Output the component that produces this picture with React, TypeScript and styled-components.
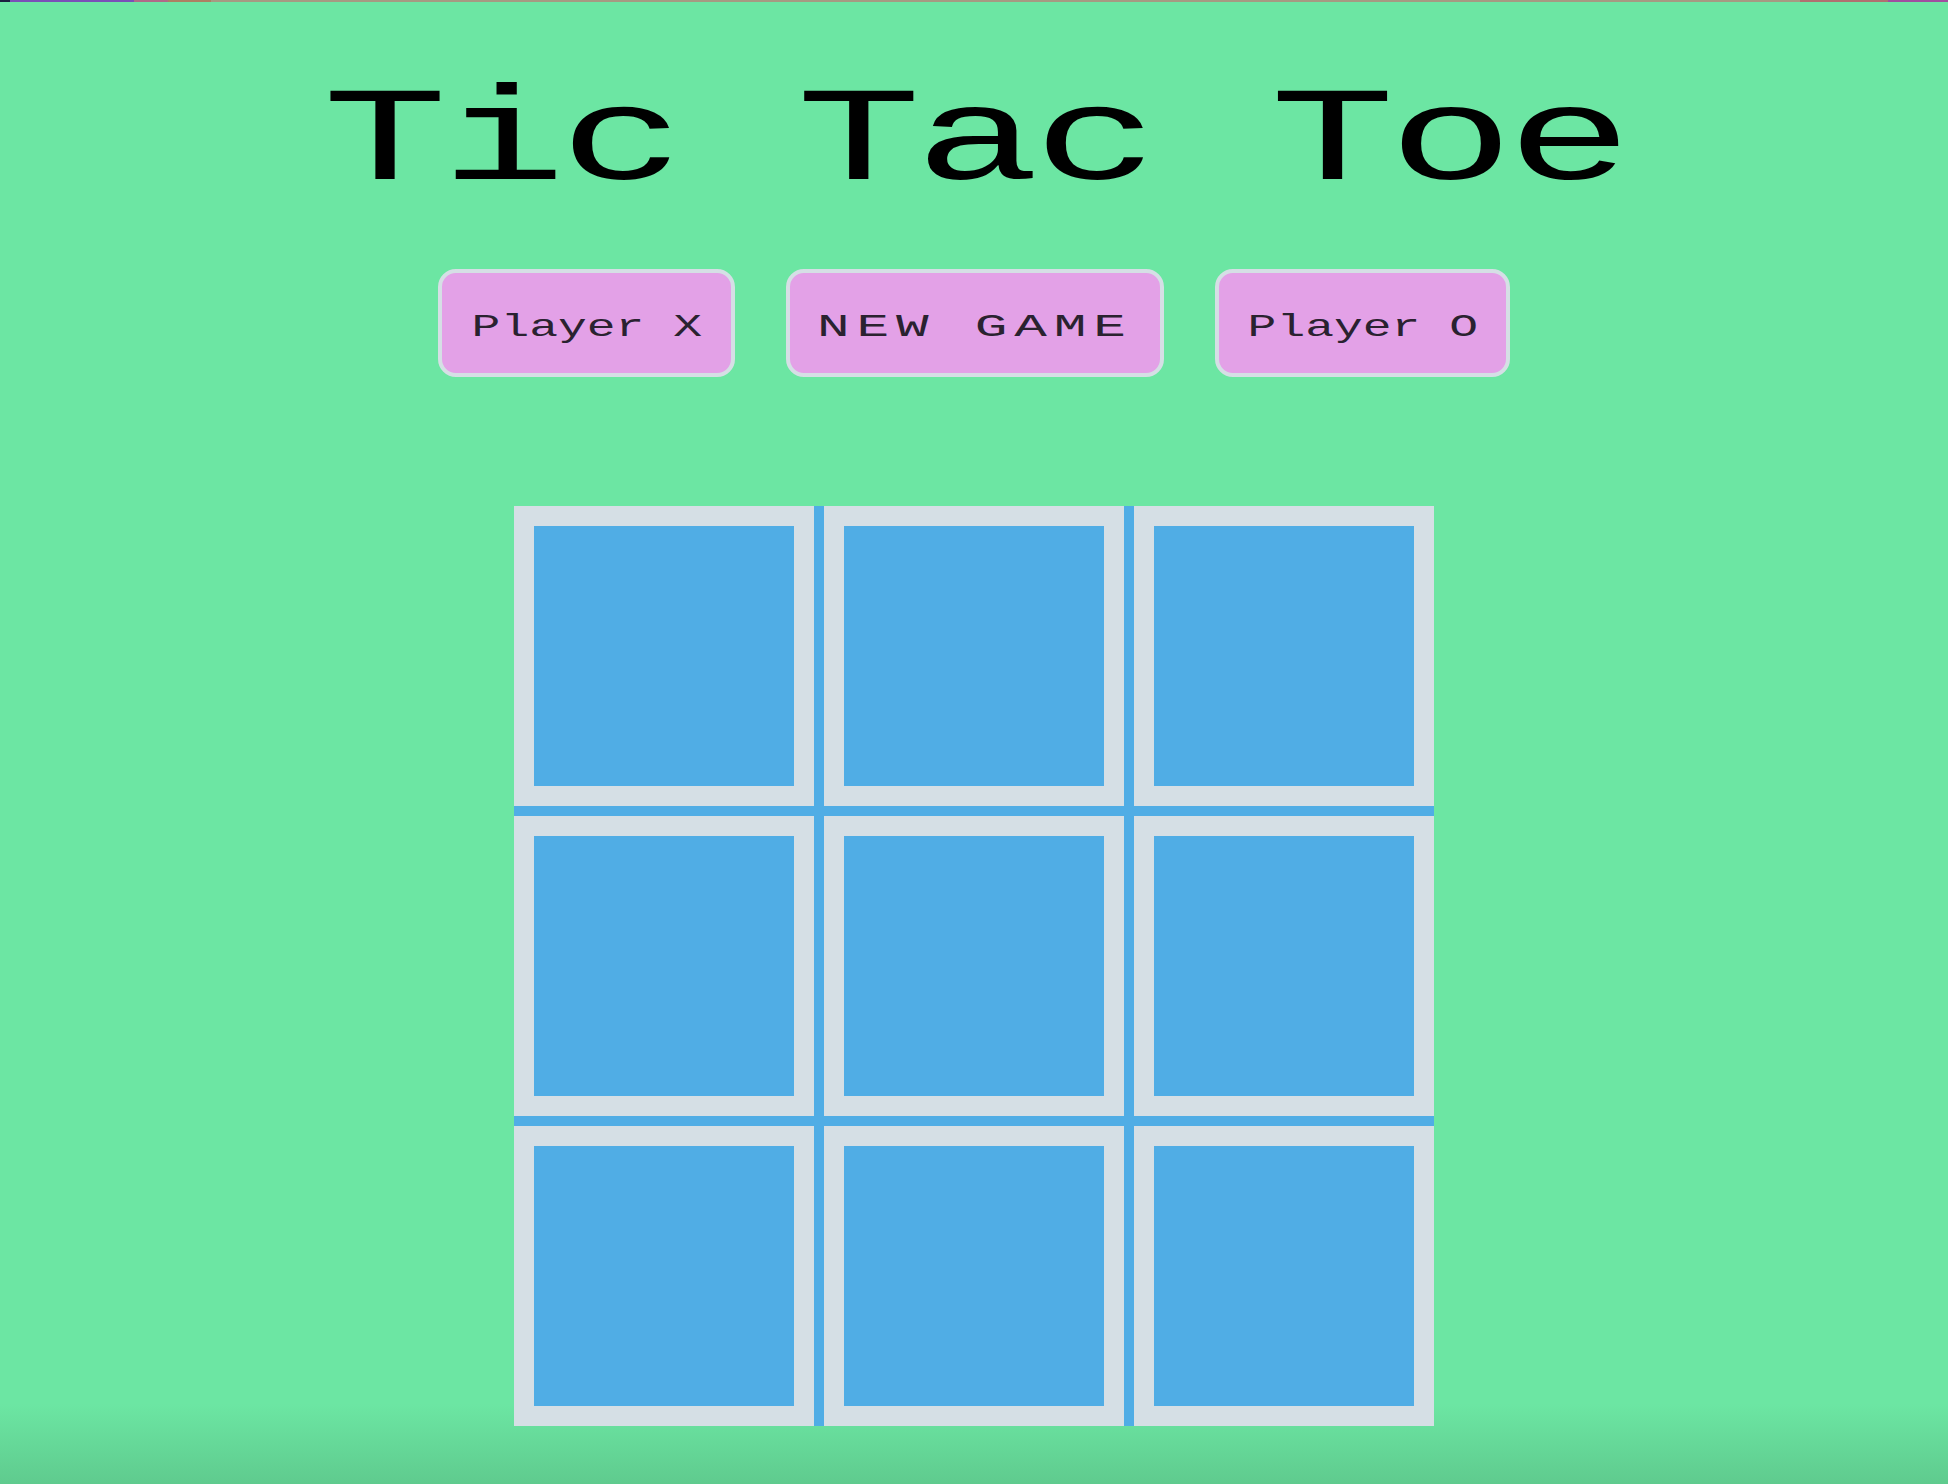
import styled, { createGlobalStyle } from 'styled-components';

// Cores usadas na página
const GREEN = '#6ce6a3';
const BLUE = '#50ade5';
const GRAY = '#d5dfe5';
const PINK = '#e3a1e7';

const GlobalStyle = createGlobalStyle`
    html, body {
        margin: 0;
        padding: 0;
    }
    body {
        min-height: 100vh;
        background: linear-gradient(to bottom, ${GREEN} 0, ${GREEN} calc(100% - 80px), #5fcb8e 100%);
        font-family: "Liberation Mono", "Courier New", monospace;
    }
`;

const Page = styled.div`
    min-height: 100vh;
    display: flex;
    flex-direction: column;
    align-items: center;
`;

// Faixa fina colorida no topo da janela
const TopStrip = styled.div`
    align-self: stretch;
    height: 2px;
    background: linear-gradient(
        to right,
        #1c1f3f 0, #1c1f3f 10px,
        #7a4fb8 10px, #7a4fb8 134px,
        #b06a88 134px, #b06a88 168px,
        #ad8062 168px, #ad8062 211px,
        #a69a82 211px, #a69a82 1800px,
        #b07070 1800px, #b07070 1888px,
        #a04ea0 1888px
    );
`;

const Title = styled.h1`
    margin: 74px 0 0;
    font-family: "Liberation Mono", "Courier New", monospace;
    font-weight: normal;
    font-size: 134px;
    line-height: 134px;
    color: #000;
`;

// Texto "esticado" na horizontal
const Stretch = styled.span<{ $scale: number; $spacing?: number }>`
    display: inline-block;
    transform: scaleX(${(p) => p.$scale});
    transform-origin: center;
    letter-spacing: ${(p) => p.$spacing ?? 0}px;
    white-space: pre;
`;

const ButtonRow = styled.div`
    display: flex;
    gap: 51px;
    margin-top: 59px;
`;

const GameButton = styled.button<{ $pad: number }>`
    box-sizing: border-box;
    height: 108px;
    padding: 8px ${(p) => p.$pad}px 0;
    display: flex;
    align-items: center;
    justify-content: center;
    background-color: ${PINK};
    border: 4px solid ${GRAY};
    border-radius: 18px;
    font-family: "Liberation Mono", "Courier New", monospace;
    font-size: 32px;
    color: #2a2230;
    cursor: pointer;
`;

const Board = styled.div`
    margin-top: 129px;
    display: grid;
    grid-template-columns: repeat(3, 300px);
    grid-template-rows: repeat(3, 300px);
    gap: 10px;
    background-color: ${BLUE};
`;

const Cell = styled.div`
    box-sizing: border-box;
    border: 20px solid ${GRAY};
    background-color: ${BLUE};
    cursor: pointer;
`;

const App = () => {
    const cells = Array.from({ length: 9 }, (_, i) => i);

    return (
        <>
            <GlobalStyle />
            <Page>
                <TopStrip />
                <Title>
                    <Stretch $scale={1.55} $spacing={-4}>Tic Tac Toe</Stretch>
                </Title>

                <ButtonRow>
                    <GameButton $pad={68}>
                        <Stretch $scale={1.5}>Player X</Stretch>
                    </GameButton>
                    <GameButton $pad={92}>
                        <Stretch $scale={1.7} $spacing={4}>NEW GAME</Stretch>
                    </GameButton>
                    <GameButton $pad={67}>
                        <Stretch $scale={1.5}>Player O</Stretch>
                    </GameButton>
                </ButtonRow>

                <Board>
                    {cells.map((i) => (
                        <Cell key={i} />
                    ))}
                </Board>
            </Page>
        </>
    );
};

export default App;
